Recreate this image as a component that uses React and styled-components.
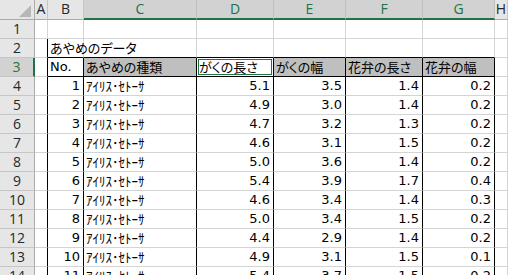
import React from 'react';
import styled, { createGlobalStyle } from 'styled-components';

const GREEN = '#217346';
const GRID = '#d4d4d4';

const columns = ['A', 'B', 'C', 'D', 'E', 'F', 'G', 'H'];
const selectedCols = ['C', 'D', 'E', 'F', 'G'];
const heads = ['がくの長さ', 'がくの幅', '花弁の長さ', '花弁の幅'];

const iris = [
    [5.1, 3.5, 1.4, 0.2],
    [4.9, 3.0, 1.4, 0.2],
    [4.7, 3.2, 1.3, 0.2],
    [4.6, 3.1, 1.5, 0.2],
    [5.0, 3.6, 1.4, 0.2],
    [5.4, 3.9, 1.7, 0.4],
    [4.6, 3.4, 1.4, 0.3],
    [5.0, 3.4, 1.5, 0.2],
    [4.4, 2.9, 1.4, 0.2],
    [4.9, 3.1, 1.5, 0.1],
    [5.4, 3.7, 1.5, 0.2]
];

const GlobalStyle = createGlobalStyle`
    html, body {
        margin: 0;
        padding: 0;
        background: #ffffff;
        overflow: hidden;
    }
`;

const App = () => {
    const body = [];

    // row 1: empty
    body.push(
        <React.Fragment key="r1">
            <RowHead>1</RowHead>
            {columns.map((c) => <Cell key={c} />)}
        </React.Fragment>
    );

    // row 2: title
    body.push(
        <React.Fragment key="r2">
            <RowHead>2</RowHead>
            <Cell $right="#000" />
            <Cell $bottom="#000" $jp $over>あやめのデータ</Cell>
            {['C', 'D', 'E', 'F', 'G'].map((c) => <Cell key={c} $bottom="#000" />)}
            <Cell />
        </React.Fragment>
    );

    // row 3: table header
    body.push(
        <React.Fragment key="r3">
            <RowHead $sel>3</RowHead>
            <Cell $right="#000" />
            <Cell $right="#000" $bottom="#000" $num>No.</Cell>
            <Cell $right="#000" $bottom="#000" $fill $jp>あやめの種類</Cell>
            {heads.map((h, i) => (
                <Cell key={h} $right="#000" $bottom="#000" $fill={i !== 0} $active={i === 0} $jp>
                    {h}
                </Cell>
            ))}
            <Cell />
        </React.Fragment>
    );

    iris.forEach((vals, i) => {
        body.push(
            <React.Fragment key={'d' + i}>
                <RowHead>{i + 4}</RowHead>
                <Cell $right="#000" />
                <Cell $right="#000" $num $align="right">{i + 1}</Cell>
                <Cell $right="#000" $kana>ｱｲﾘｽ･ｾﾄｰｻ</Cell>
                {vals.map((v, j) => (
                    <Cell key={j} $right="#000" $num $align="right">{v.toFixed(1)}</Cell>
                ))}
                <Cell />
            </React.Fragment>
        );
    });

    return (
        <>
            <GlobalStyle />
            <Sheet>
                <Corner>
                    <svg width="35" height="19" viewBox="0 0 35 19">
                        <polygon points="31,5 31,17 19,17" fill="#b7b7b7" />
                    </svg>
                </Corner>
                {columns.map((c) => (
                    <ColHead key={c} $sel={selectedCols.includes(c)}>{c}</ColHead>
                ))}
                {body}
            </Sheet>
        </>
    );
};

export default App;

const Sheet = styled.div`
    display: grid;
    grid-template-columns: 35px 13px 36px 113px 77px 72px 77px 72px 13px;
    grid-template-rows: 20px;
    grid-auto-rows: 19px;
    width: 508px;
`

const Corner = styled.div`
    background: #e6e6e6;
    border-right: 1px solid #ababab;
    border-bottom: 1px solid #ababab;
    box-sizing: border-box;
    svg {
        display: block;
    }
`

const ColHead = styled.div`
    box-sizing: border-box;
    display: flex;
    align-items: center;
    justify-content: center;
    background: ${(p) => (p.$sel ? '#d2d2d2' : '#e6e6e6')};
    color: ${(p) => (p.$sel ? GREEN : '#262626')};
    border-right: 1px solid ${(p) => (p.$sel ? '#c0c0c0' : '#c6c6c6')};
    border-bottom: ${(p) => (p.$sel ? `2px solid ${GREEN}` : '1px solid #ababab')};
    font-family: "Open Sans", "Liberation Sans", sans-serif;
    font-size: 14px;
    line-height: 1;
    padding-bottom: 1px;
    overflow: hidden;
`

const RowHead = styled.div`
    box-sizing: border-box;
    display: flex;
    align-items: center;
    justify-content: center;
    background: ${(p) => (p.$sel ? '#d2d2d2' : '#e6e6e6')};
    color: ${(p) => (p.$sel ? GREEN : '#262626')};
    border-right: ${(p) => (p.$sel ? `2px solid ${GREEN}` : '1px solid #ababab')};
    border-bottom: 1px solid #c6c6c6;
    font-family: "Open Sans", "Liberation Sans", sans-serif;
    font-size: 14px;
    line-height: 1;
`

const Cell = styled.div`
    box-sizing: border-box;
    position: relative;
    display: flex;
    align-items: flex-end;
    justify-content: ${(p) => (p.$align === 'right' ? 'flex-end' : 'flex-start')};
    padding: 0 3px 2px 2px;
    background: ${(p) => (p.$fill ? '#bfbfbf' : '#ffffff')};
    border-right: 1px solid ${(p) => p.$right || GRID};
    border-bottom: 1px solid ${(p) => p.$bottom || GRID};
    box-shadow: ${(p) => (p.$active ? `inset 0 0 0 1px #ffffff, inset 0 0 0 2px ${GREEN}` : 'none')};
    color: #000;
    white-space: nowrap;
    overflow: ${(p) => (p.$over ? 'visible' : 'hidden')};
    z-index: ${(p) => (p.$over ? 2 : 1)};
    font-family: ${(p) => (p.$num
        ? '"DejaVu Sans", "Noto Sans CJK JP", sans-serif'
        : '"Noto Sans CJK JP", sans-serif')};
    font-size: 13px;
    font-feature-settings: ${(p) => (p.$jp ? '"palt"' : 'normal')};
    line-height: 15px;
`
